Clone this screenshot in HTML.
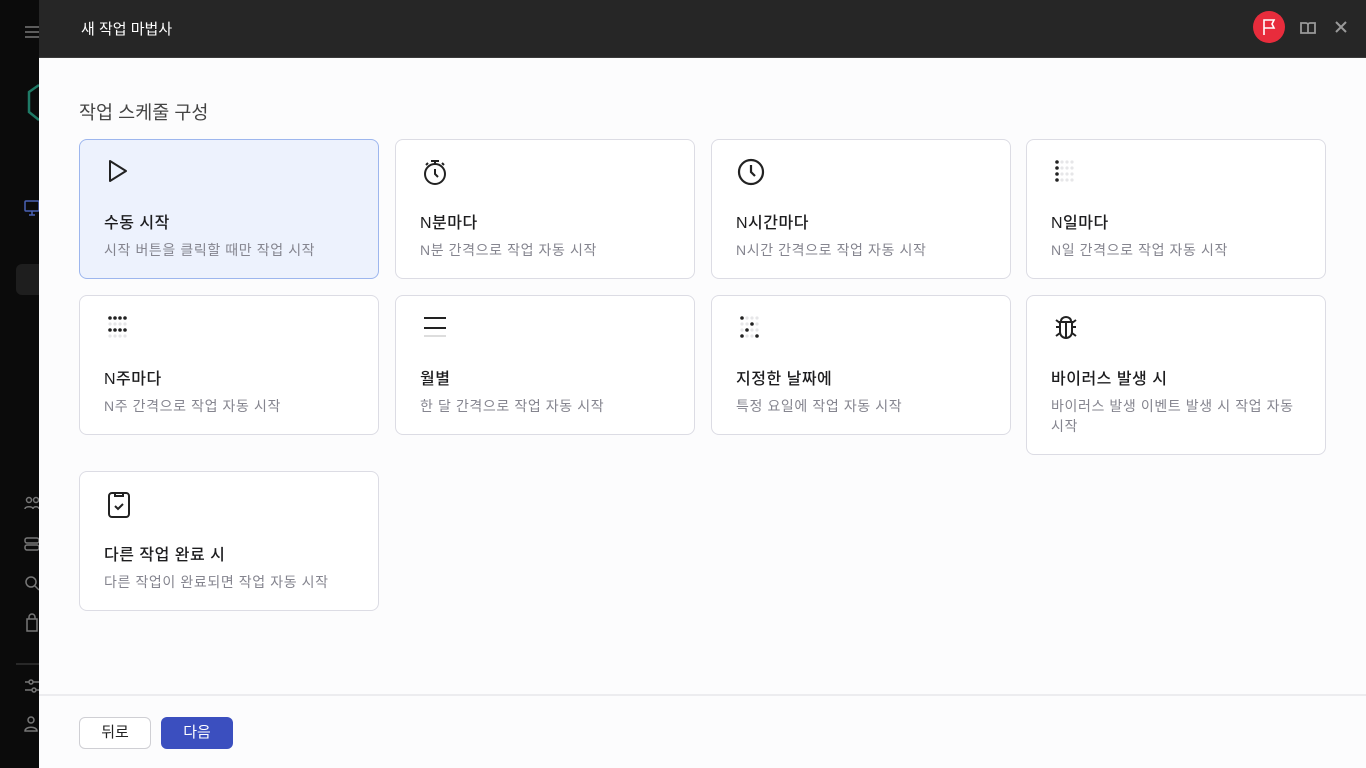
<!DOCTYPE html>
<html><head><meta charset="utf-8"><style>
*{margin:0;padding:0;box-sizing:border-box}
body{width:1366px;height:768px;overflow:hidden;background:#0b0b0b;font-family:"Liberation Sans","Noto Sans CJK KR",sans-serif;position:relative}
.side{position:absolute;left:0;top:0;width:39px;height:768px;background:#0b0b0b}
.main{position:absolute;left:39px;top:0;width:1327px;height:768px;background:#fcfcfd}
.hdr{position:absolute;left:0;top:0;width:1327px;height:58px;background:#262626;border-bottom:1px solid #3a3a3a}
.hdr .t{position:absolute;left:42px;top:18px;color:#fff;font-size:15px}
.h2{position:absolute;left:40px;top:99px;font-size:18.5px;color:#444}
.card{position:absolute;width:300px;height:140px;border:1px solid #dcdce4;border-radius:8px;background:#fff}
.card.sel{background:#edf2fd;border-color:#9db6ee}
.card svg{position:absolute;left:25px;top:18px}
.card .ti{position:absolute;left:24px;top:69px;font-size:16px;color:#1d1d1f;font-weight:500;letter-spacing:0.5px}
.card .de{position:absolute;left:24px;top:100px;font-size:14px;color:#85858f;line-height:20px;width:260px;letter-spacing:0.6px}
.foot{position:absolute;left:0;top:694px;width:1327px;height:74px;border-top:2px solid #ececef;background:#fcfcfd}
.b1{position:absolute;left:40px;top:21px;width:72px;height:32px;border:1px solid #cfcfd4;border-radius:6px;background:#fff;font-size:15px;text-align:center;line-height:29px;color:#222}
.b2{position:absolute;left:122px;top:21px;width:72px;height:32px;border-radius:6px;background:#3b4fbf;font-size:15px;text-align:center;line-height:31px;color:#fff}
</style></head><body>
<div class="side">
<svg width="39" height="768" style="position:absolute;left:0;top:0" fill="none" stroke="#777" stroke-width="1.5">
<path d="M25 27h14M25 32h14M25 37h14"/>
<path d="M39 85l-10 7v20l10 8" stroke="#1f7a66" stroke-width="2.5"/>
<rect x="25" y="201" width="14" height="10" rx="1" stroke="#4a62b4"/><path d="M29 215h6M32 211v4" stroke="#4a62b4"/>
<rect x="16" y="264" width="30" height="31" rx="6" fill="#1e1e1e" stroke="none"/>
<circle cx="29" cy="500" r="2.5"/><circle cx="36" cy="500" r="2.5"/><path d="M25 509c0-3 8-3 8 0M33 509c0-3 6-3 6 0"/>
<rect x="25" y="538" width="14" height="5" rx="2"/><rect x="25" y="545" width="14" height="5" rx="2"/>
<circle cx="31" cy="582" r="5"/><path d="M35 586l4 4"/>
<path d="M27 619h10v12H27zM29 619v-2a3 3 0 016 0v2"/>
<path d="M16 664h23" stroke="#333"/>
<path d="M25 682h14M25 690h14"/><circle cx="31" cy="682" r="2" fill="#0b0b0b"/><circle cx="34" cy="690" r="2" fill="#0b0b0b"/>
<circle cx="31" cy="720" r="3"/><path d="M25 731c0-5 12-5 12 0z"/>
</svg>
</div>
<div class="main">
<div class="hdr"><div class="t">새 작업 마법사</div>
<svg width="120" height="58" style="position:absolute;left:1207px;top:0">
<circle cx="23" cy="27" r="16" fill="#e82c3c"/>
<path d="M18 35V20h10l-2 4 2 4h-10" fill="none" stroke="#fff" stroke-width="1.6"/>
<path d="M55 23h5a2 2 0 012 2v8h-7zM69 23h-5a2 2 0 00-2 2v8h7z" fill="none" stroke="#999" stroke-width="1.8"/>
<path d="M90 22l10 10M100 22l-10 10" stroke="#999" stroke-width="2"/>
</svg></div>
<div class="h2">작업 스케줄 구성</div>

<div class="card sel" style="left:40px;top:139px;height:140px">
<svg width="26" height="26" fill="none" stroke="#222" stroke-width="2"><path d="M5 3v20l16-10z" stroke-linejoin="round"/></svg>
<div class="ti">수동 시작</div><div class="de">시작 버튼을 클릭할 때만 작업 시작</div></div>

<div class="card" style="left:356px;top:139px">
<svg width="28" height="28" fill="none" stroke="#222" stroke-width="2"><circle cx="14" cy="16" r="10"/><path d="M10 3h8M14 3v3M14 11v5l3 3M5 7l2-2M23 7l-2-2"/></svg>
<div class="ti">N분마다</div><div class="de">N분 간격으로 작업 자동 시작</div></div>

<div class="card" style="left:672px;top:139px">
<svg width="28" height="28" fill="none" stroke="#222" stroke-width="2.2"><circle cx="14" cy="14" r="12"/><path d="M14 7v7l4 4"/></svg>
<div class="ti">N시간마다</div><div class="de">N시간 간격으로 작업 자동 시작</div></div>

<div class="card" style="left:987px;top:139px">
<svg width="28" height="28"><g fill="#e6e6e8"><circle cx="10" cy="4" r="1.6"/><circle cx="15" cy="4" r="1.6"/><circle cx="20" cy="4" r="1.6"/><circle cx="10" cy="10" r="1.6"/><circle cx="15" cy="10" r="1.6"/><circle cx="20" cy="10" r="1.6"/><circle cx="10" cy="16" r="1.6"/><circle cx="15" cy="16" r="1.6"/><circle cx="20" cy="16" r="1.6"/><circle cx="10" cy="22" r="1.6"/><circle cx="15" cy="22" r="1.6"/><circle cx="20" cy="22" r="1.6"/></g><g fill="#222"><circle cx="5" cy="4" r="1.8"/><circle cx="5" cy="10" r="1.8"/><circle cx="5" cy="16" r="1.8"/><circle cx="5" cy="22" r="1.8"/></g></svg>
<div class="ti">N일마다</div><div class="de">N일 간격으로 작업 자동 시작</div></div>

<div class="card" style="left:40px;top:295px">
<svg width="28" height="28"><g fill="#e6e6e8"><circle cx="5" cy="10" r="1.6"/><circle cx="10" cy="10" r="1.6"/><circle cx="15" cy="10" r="1.6"/><circle cx="20" cy="10" r="1.6"/><circle cx="5" cy="22" r="1.6"/><circle cx="10" cy="22" r="1.6"/><circle cx="15" cy="22" r="1.6"/><circle cx="20" cy="22" r="1.6"/></g><g fill="#222"><circle cx="5" cy="4" r="1.8"/><circle cx="10" cy="4" r="1.8"/><circle cx="15" cy="4" r="1.8"/><circle cx="20" cy="4" r="1.8"/><circle cx="5" cy="16" r="1.8"/><circle cx="10" cy="16" r="1.8"/><circle cx="15" cy="16" r="1.8"/><circle cx="20" cy="16" r="1.8"/></g></svg>
<div class="ti">N주마다</div><div class="de">N주 간격으로 작업 자동 시작</div></div>

<div class="card" style="left:356px;top:295px">
<svg width="28" height="28" fill="none" stroke-width="2"><path d="M3 4h22M3 14h22" stroke="#222"/><path d="M3 22h22" stroke="#ddd"/></svg>
<div class="ti">월별</div><div class="de">한 달 간격으로 작업 자동 시작</div></div>

<div class="card" style="left:672px;top:295px">
<svg width="28" height="28"><g fill="#e6e6e8"><circle cx="10" cy="4" r="1.6"/><circle cx="15" cy="4" r="1.6"/><circle cx="20" cy="4" r="1.6"/><circle cx="5" cy="10" r="1.6"/><circle cx="10" cy="10" r="1.6"/><circle cx="20" cy="10" r="1.6"/><circle cx="5" cy="16" r="1.6"/><circle cx="15" cy="16" r="1.6"/><circle cx="20" cy="16" r="1.6"/><circle cx="10" cy="22" r="1.6"/><circle cx="15" cy="22" r="1.6"/></g><g fill="#222"><circle cx="5" cy="4" r="1.8"/><circle cx="15" cy="10" r="1.8"/><circle cx="10" cy="16" r="1.8"/><circle cx="5" cy="22" r="1.8"/><circle cx="20" cy="22" r="1.8"/></g></svg>
<div class="ti">지정한 날짜에</div><div class="de">특정 요일에 작업 자동 시작</div></div>

<div class="card" style="left:987px;top:295px;height:160px">
<svg width="28" height="28" fill="none" stroke="#222" stroke-width="2"><path d="M9 7a5 4 0 0110 0M8 8h12v10a6 6 0 01-12 0zM14 9v15M8 13H4M20 13h4M8 19l-4 3M20 19l4 3M8 9L4 6M20 9l4-3"/></svg>
<div class="ti">바이러스 발생 시</div><div class="de" style="width:250px">바이러스 발생 이벤트 발생 시 작업 자동 시작</div></div>

<div class="card" style="left:40px;top:471px">
<svg width="28" height="30" fill="none" stroke="#222" stroke-width="2"><rect x="4" y="3" width="20" height="24" rx="3"/><path d="M10 3v3h8V3M10 16l3 3 5-5"/></svg>
<div class="ti">다른 작업 완료 시</div><div class="de">다른 작업이 완료되면 작업 자동 시작</div></div>

<div class="foot"><div class="b1">뒤로</div><div class="b2">다음</div></div>
</div>
</body></html>
